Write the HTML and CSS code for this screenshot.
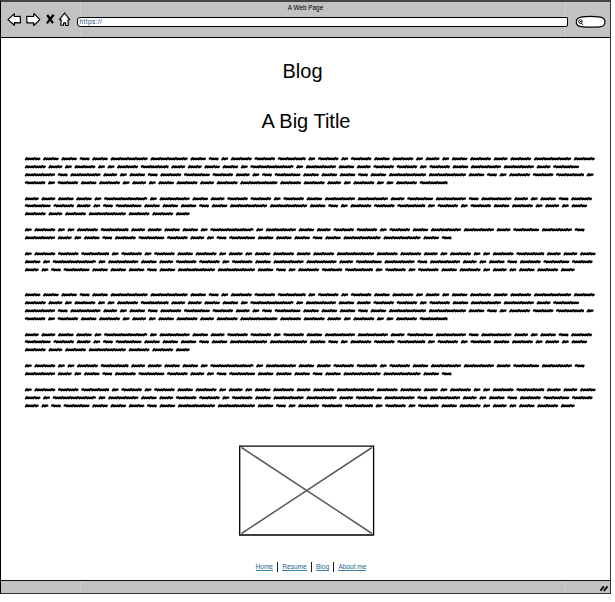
FILE: index.html
```html
<!DOCTYPE html>
<html lang="en">
<head>
<meta charset="utf-8">
<title>A Web Page</title>
<link rel="stylesheet" href="styles.css">
</head>
<body>
<div class="window">
  <header class="chrome">
    <div class="window-title">A Web Page</div>
    <div class="toolbar">
      <svg class="nav" width="66" height="18" viewBox="0 0 66 18" aria-hidden="true">
        <g fill="#fff" stroke="#000" stroke-width="1.2" stroke-linejoin="round">
          <path d="M1 8.6 7.2 2.9 7.4 5.5 13.2 5.3 13.5 11.8 7.5 11.6 7.4 14.3Z"/>
          <path d="M32.8 8.6 27 2.7 26.6 5.5 19.7 5.3 20 11.9 26.7 11.9 26.8 14.5Z"/>
          <path d="M57.6 2 52.5 8.6 54.2 8.9 53.8 14 56.2 14.5 56.7 11.8 58.6 11.8 58.8 14.5 61.3 14.3 61 9 62.7 8.7Z"/>
        </g>
        <path d="M40.2 4 46 12.2M46.6 3.8 39.9 12.4" fill="none" stroke="#000" stroke-width="2.3"/>
      </svg>
      <div class="address"><span>https://</span></div>
      <svg class="search" width="32" height="14" viewBox="0 0 32 14" aria-hidden="true">
        <path d="M6 2.1Q15 .7 25.5 2.2Q30.2 3 29.9 7.5Q29.5 11.4 25 11.8Q15 12.6 6 11.6Q1.2 11 1.3 7Q1.4 3 6 2.1Z" fill="#fff" stroke="#000" stroke-width="1.2"/>
        <circle cx="5.4" cy="6.6" r="1.8" fill="none" stroke="#000" stroke-width=".9"/>
        <path d="M5 6.6h1.5M6.4 8.1 7.6 9.8" stroke="#000"/>
      </svg>
    </div>
  </header>
  <main class="page">
    <h1>Blog</h1>
    <h2>A Big Title</h2>
    <div class="copy"></div>
    <div class="copy"></div>
    <svg class="image" width="136" height="91" viewBox="0 0 136 91" aria-hidden="true">
      <path d="M2.5 2.5 133 88.5M133 2.5 2.5 88.5" stroke="#5c5c5c" stroke-width="1.5"/>
      <path d="M.7 1.1H134.6V90H.7Z" fill="none" stroke="#000" stroke-width="1.3"/>
    </svg>
    <nav class="links">
      <a href="#">Home</a><i></i><a href="#">Resume</a><i></i><a href="#">Blog</a><i></i><a href="#">About me</a>
    </nav>
  </main>
  <footer class="status">
    <svg width="10" height="9" viewBox="0 0 10 9" aria-hidden="true"><path d="M1.4 6.8 4.8 2.4M4.8 7 8.5 2.4" stroke="#000" stroke-width="1.8"/></svg>
  </footer>
</div>
<script src="scribble.js"></script>
</body>
</html>
```

FILE: styles.css
```css
* { box-sizing: border-box; }
body {
  margin: 0;
  background: #fff;
  color: #000;
  font-family: "Liberation Sans", sans-serif;
}
.window {
  display: flex;
  flex-direction: column;
  width: 611px;
  height: 594px;
  border: solid #333;
  border-width: 2px 1px 1px 1px;
  border-top-color: #444;
  border-right-color: #333;
  border-left-color: #000;
}
.chrome {
  height: 36px;
  border-bottom: 1px solid #000;
  background:
    linear-gradient(#cecece, #cecece) 79px 0 / 1px 100% no-repeat,
    linear-gradient(#cecece, #cecece) 564px 0 / 1px 100% no-repeat,
    #c2c2c2;
}
.window-title {
  height: 9px;
  padding-top: 1px;
  text-align: center;
  font-size: 6.4px;
  line-height: 9px;
}
.toolbar {
  display: flex;
  align-items: center;
  height: 18px;
  padding-left: 6px;
}
.nav { flex: none; }
.address {
  width: 491px;
  height: 10px;
  margin: 3px 0 0 4px;
  border: 1px solid #000;
  border-radius: 3px 1px 2px 3px;
  background: #fff;
  font-size: 6.5px;
  line-height: 8px;
  letter-spacing: .4px;
  color: #234e7d;
  padding-left: 1.5px;
}
.address span { display: block; }
.search { flex: none; margin: 3px 0 0 7px; }
.page {
  display: flex;
  flex: 1;
  flex-direction: column;
  padding: 20px 14px 0 24px;
}
h1, h2 {
  margin: 0;
  text-align: center;
  font-size: 20px;
  font-weight: 400;
  line-height: 26px;
}
h1 { margin-left: -16px; }
h2 { margin: 24px 0 0 -9px; }
.copy { height: 119px; margin-top: 21px; }
.copy + .copy { margin-top: 17px; }
.copy p { margin: 0 0 7.9px; }
.copy svg { display: block; width: 571px; height: 7.92px; overflow: visible; }
.copy path {
  fill: none;
  stroke: #000;
  stroke-width: 2.1;
  stroke-linecap: round;
  stroke-linejoin: round;
}
.image { align-self: center; margin: 35px 0 0 -8px; flex: none; }
.links {
  display: flex;
  justify-content: center;
  align-items: center;
  height: 12px;
  margin: 25px 0 0 1px;
  font-size: 6.55px;
  line-height: 8px;
}
.links a {
  color: #24648f;
  text-decoration: none;
  border-bottom: 1px solid #3c83b5;
  height: 8px;
  white-space: nowrap;
}
.links i { width: 1.3px; height: 10px; margin: 0 4px; background: #222; }
.status {
  display: flex;
  justify-content: flex-end;
  height: 13px;
  padding: 3px 1px 0 0;
  border-top: 1px solid #111;
  background:
    linear-gradient(#cecece, #cecece) 79px 0 / 1px 100% no-repeat,
    linear-gradient(#cecece, #cecece) 564px 0 / 1px 100% no-repeat,
    #c2c2c2;
}
```

FILE: scribble.js
```js
// Word lengths, in thirds of a pixel.
const WORDS = { a: 46, t: 29, i: 20, p: 41, q: 62, s: 61, n: 83, g: 111, d: 90, e: 77, h: 129 };

// Each line: its words, then its full length in pixels.
const PARAGRAPHS = [
  [["aaataggatiqsnisisaqipiaqpqgq", 569.7], ["qpiqiiqnppaaihidapssisaddpe", 554], ["dtdpiatqespiteaaataggatiqsni", 568.5], ["sisaqipiaqpqgqqpiqiiqn", 422.5]],
  [["ppaaihidapssisaddpedtdpiatq", 567], ["espiteaaataggatiqsnisisaqipia", 562], ["qpqgqqp", 164.7]],
  [["iqiiqnppaaihidapssisaddpedt", 559.5], ["dpiatqespiteaaataggat", 426.5]],
  [["iqsnisisaqipiaqpqgqqpiqiiqnppa", 570.5], ["aihidapssisaddpedtdpiatqes", 567.5], ["piteaaataggatiqsnisisaqipiaqp", 549.7]]
];

function stroke(kind, x, w) {
  const thin = "tsneh".includes(kind);
  let d = `M${(x + 0.8).toFixed(2)} ${thin ? 3.7 : 4.5}`;
  let k = 0;
  for (let px = x + 1.8; px < x + w - 1; px += 1.3) {
    const y = k % 2 ? 4.3 : (k % 6 === 0 ? 3 : 3.5);
    d += `L${px.toFixed(2)} ${y}`;
    k++;
  }
  return d + `L${(x + w - 0.9).toFixed(2)} 3.6`;
}

function line([codes, length]) {
  const widths = [...codes].map(c => WORDS[c] / 3);
  const gap = (length - widths.reduce((a, b) => a + b, 0)) / (codes.length - 1);
  let x = 0, d = "";
  widths.forEach((w, n) => { d += stroke(codes[n], x, w); x += w + gap; });
  return `<svg><path d="${d}"/></svg>`;
}

document.querySelectorAll(".copy").forEach(box => {
  box.innerHTML = PARAGRAPHS.map(p => `<p>${p.map(line).join("")}</p>`).join("");
});
```
